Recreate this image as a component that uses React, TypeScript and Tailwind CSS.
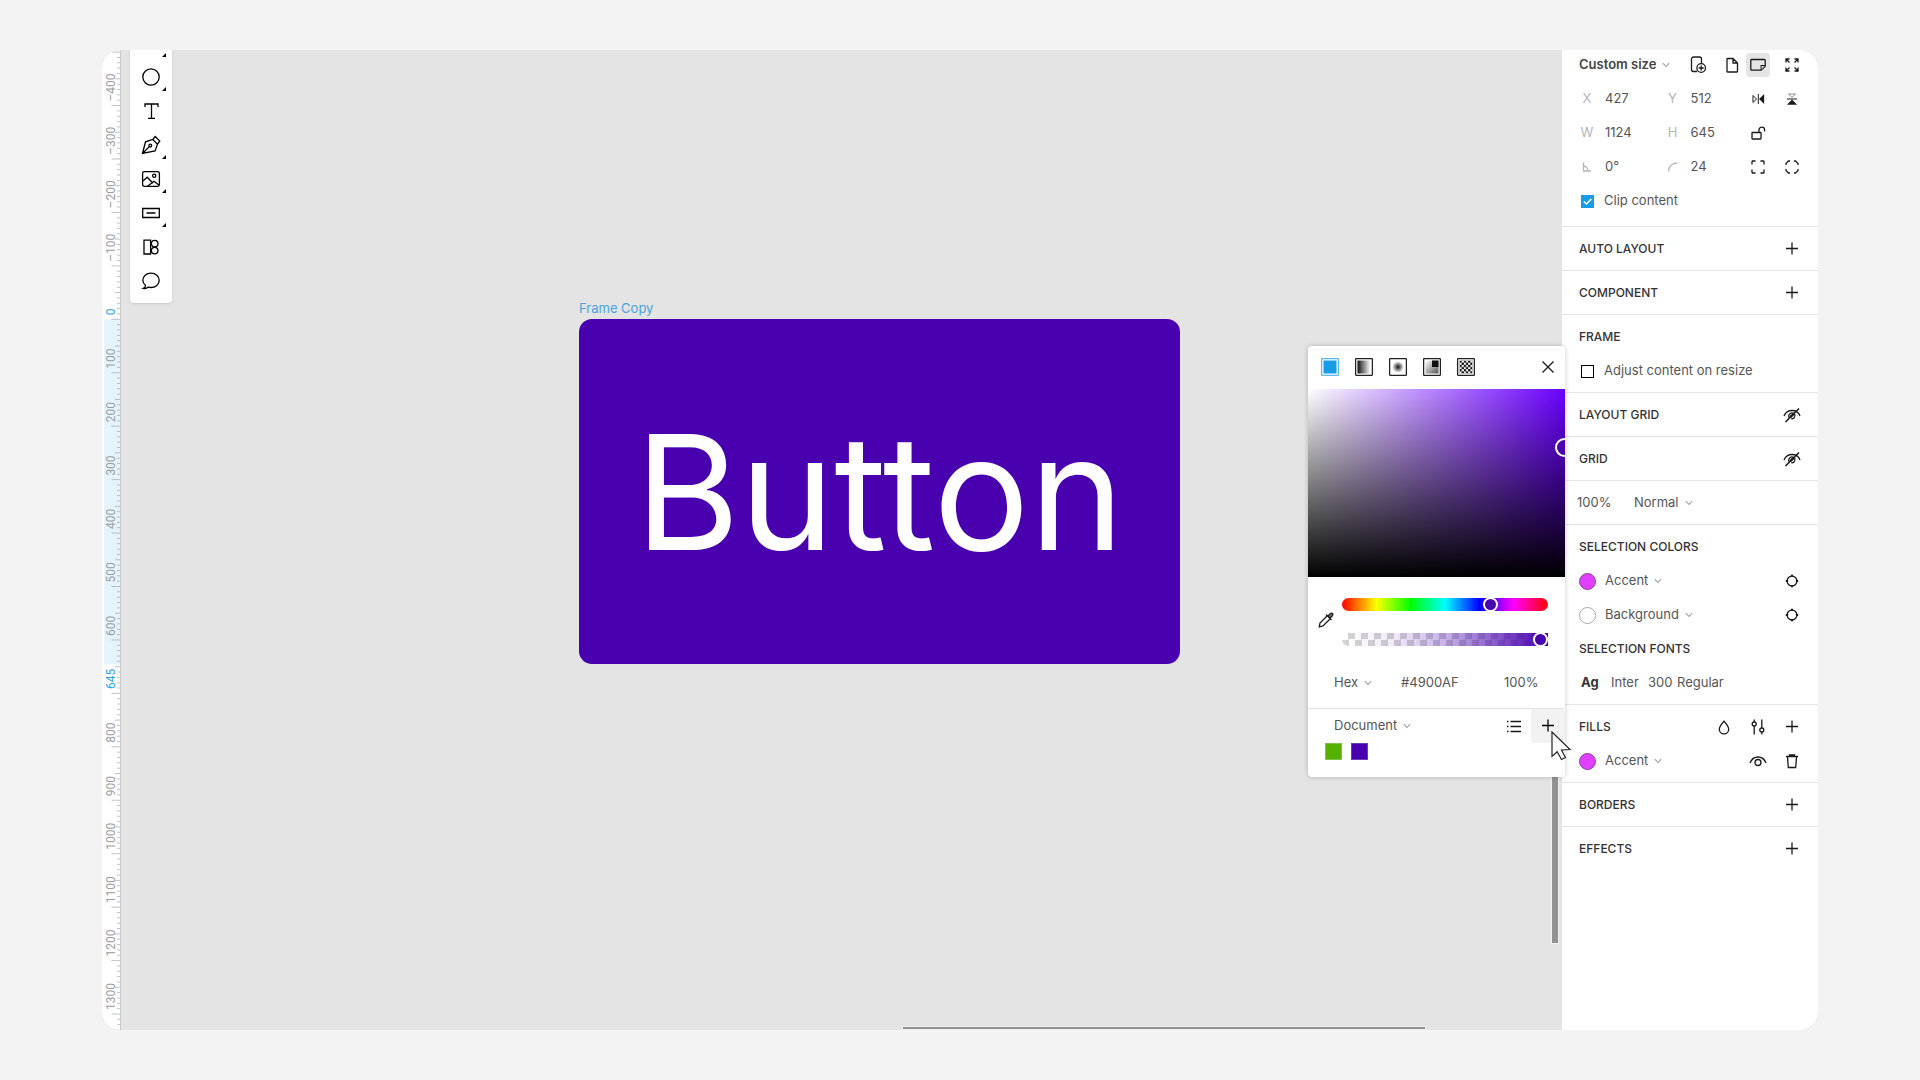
import { useId, type ReactNode } from "react";

type IconProps = { size?: number; children: ReactNode; className?: string };

function Icon({ size = 20, children, className = "" }: IconProps) {
  return (
    <svg
      width={size}
      height={size}
      viewBox={`0 0 ${size} ${size}`}
      fill="none"
      stroke="currentColor"
      strokeWidth="1.3"
      className={`shrink-0 ${className}`}
      aria-hidden="true"
    >
      {children}
    </svg>
  );
}

const Chevron = () => (
  <svg width="8" height="6" viewBox="0 0 8 6" fill="none" stroke="#a3a3a3" strokeWidth="1.1" className="pointer-events-none shrink-0" aria-hidden="true">
    <path d="M0.8 1.2 4 4.4 7.2 1.2" />
  </svg>
);

const PlusIcon = () => (
  <Icon>
    <path d="M10 3.500v12M4 9.500h12" />
  </Icon>
);

const HiddenIcon = () => (
  <Icon>
    <path d="M2 11C3.600 7.300 6.400 5.500 10 5.500s6.600 1.800 8 5.500" />
    <path d="M7.200 13a3.200 3.200 0 1 1 5.600-3.500c.8 2.600-1.300 4.500-3.500 4.200" />
    <path d="M3.500 17 17 3.500" strokeWidth="1.600" />
    <path d="M8.300 12.200l3.700-3.700" strokeWidth="2.400" />
  </Icon>
);

const TargetIcon = () => (
  <Icon>
    <circle cx="10" cy="10" r="4.900" />
    <path d="M10 3.800v2.300M10 13.900v2.300M3.800 10h2.300M13.900 10h2.300" strokeWidth="2.200" />
  </Icon>
);

/* Ruler */

const ZERO_Y = 269.3;
const SCALE = 0.5344;
const at = (v: number) => ZERO_Y + v * SCALE;

function Ruler() {
  const ticks = Array.from({ length: 186 }, (_, i) => -500 + i * 10);
  const labels = [-400, -300, -200, -100, 100, 200, 300, 400, 500, 600, 800, 900, 1000, 1100, 1200, 1300];
  return (
    <svg className="h-full w-[19px] shrink-0 bg-white" fontFamily="Roboto, sans-serif" fontSize="12" aria-label="Vertical ruler">
      <rect x="2" y={at(0)} width="16" height={645 * SCALE} fill="#e5f4fc" />
      {ticks.map((v) => {
        const x = v % 100 === 0 ? 9.500 : v % 50 === 0 ? 13 : 15;
        return <path key={v} d={`M${x} ${at(v)}H18`} stroke="#7d8a90" strokeOpacity="0.5" />;
      })}
      <path d="M18.500 0V2000" stroke="#c9c9c9" />
      {labels.map((v) => (
        <text key={v} transform={`translate(13 ${at(v) - 4}) rotate(-90)`} fill="#9a9ea1">
          {v < 0 ? `–${-v}` : v}
        </text>
      ))}
      <text transform={`translate(13 ${at(0) - 4}) rotate(-90)`} fill="#2aa3e8">0</text>
      <text transform={`translate(13 ${at(645) + 25}) rotate(-90)`} fill="#2aa3e8">645</text>
    </svg>
  );
}

/* Toolbar */

type Tool = { name: string; more?: boolean; icon: ReactNode };

const tools: Tool[] = [
  { name: "Ellipse", more: true, icon: <circle cx="10" cy="10" r="8.200" /> },
  { name: "Text", icon: <path d="M4 6V3h13v3M10.500 3v14.300M7 17.300h7" /> },
  {
    name: "Pen",
    more: true,
    icon: (
      <>
        <path d="M1.500 18.500 4.500 6.800 11.800 4.500l4.700 4.700-2.500 6.800zM11.800 4.500l2.400-3 4.600 4.500-2.300 3.200M1.500 18.500l6.800-6.900" />
        <circle cx="9.300" cy="10.600" r="1.400" />
      </>
    ),
  },
  {
    name: "Image",
    more: true,
    icon: (
      <>
        <rect x="1.600" y="2.600" width="16.800" height="14.800" rx="1.800" />
        <circle cx="13.200" cy="6.800" r="1.600" />
        <path d="M2 12l4.200-3.800 5.800 6M6.500 17.200l6.500-5 5.200 4" />
      </>
    ),
  },
  { name: "Input", more: true, icon: <path d="M1.700 5.500h16.600v9H1.700zM5.500 10h9" /> },
  {
    name: "Component",
    icon: (
      <>
        <path d="M3 3.200h6.600v13.800H3z" />
        <circle cx="13.700" cy="6.600" r="3.300" />
        <circle cx="13.700" cy="13.600" r="3.300" />
      </>
    ),
  },
  {
    name: "Comment",
    icon: <path d="M4.500 14.300C2.700 12.900 1.800 11.300 1.800 9.300c0-4 3.600-7.200 8.200-7.200s8.200 3.200 8.200 7.200-3.600 7.200-8.200 7.200c-1 0-1.900-.1-2.700-.4-1.400 1.300-3.200 1.700-5 1.300 1.500-.6 2.300-1.700 2.200-3.100z" />,
  },
];

const MoreMark = () => (
  <svg width="4" height="4" viewBox="0 0 4 4" className="absolute right-1.5 bottom-[3px]" aria-hidden="true">
    <path d="M4 0v4H0z" />
  </svg>
);

function Toolbar() {
  return (
    <div role="toolbar" aria-label="Tools" className="absolute top-0 left-[9px] w-[42px] rounded-b bg-white pb-[5px] shadow-sm">
      <div className="relative h-2.5">
        <MoreMark />
      </div>
      {tools.map((t) => (
        <button key={t.name} type="button" aria-label={t.name} className="relative flex h-[34px] w-full items-center justify-center">
          <Icon>{t.icon}</Icon>
          {t.more && <MoreMark />}
        </button>
      ))}
    </div>
  );
}

/* Shared controls */

function IconButton({ label, active, children }: { label: string; active?: boolean; children: ReactNode }) {
  return (
    <button type="button" aria-label={label} className="flex h-[34px] w-[34px] shrink-0 items-center justify-center text-[#1a1a1a]">
      <span className={active ? "flex size-6 items-center justify-center rounded-sm bg-[#e5e5e5]" : "flex size-6 items-center justify-center"}>
        {children}
      </span>
    </button>
  );
}

function Dropdown({ label, value, strong }: { label: string; value: string; strong?: boolean }) {
  return (
    <label className="flex items-center gap-1.5">
      <select
        aria-label={label}
        defaultValue={value}
        className={strong ? "field-sizing-content appearance-none font-semibold text-[#444]" : "field-sizing-content appearance-none"}
      >
        <option>{value}</option>
      </select>
      <Chevron />
    </label>
  );
}

function Field({ label, mark, value }: { label: string; mark: ReactNode; value: string }) {
  const id = useId();
  return (
    <>
      <label htmlFor={id} aria-label={label} className="flex justify-center text-[#b5b5b5]">
        {mark}
      </label>
      <input id={id} defaultValue={value} className="w-full min-w-0 pl-px" />
    </>
  );
}

const fieldRow = "grid h-[34px] grid-cols-[34px_1fr_34px_1fr_34px_34px] items-center";

function Section({ title, actions, children }: { title: string; actions?: ReactNode; children?: ReactNode }) {
  return (
    <section className="border-t border-[#e4e4e4] pt-[5px] pr-[9px] pb-1 pl-2">
      <div className="flex h-[34px] items-center">
        <Heading>{title}</Heading>
        {actions}
      </div>
      {children}
    </section>
  );
}

const Heading = ({ children }: { children: ReactNode }) => (
  <h2 className="flex-1 pl-[9px] text-xs font-medium text-[#333]">{children}</h2>
);

function ColorRow({ name, swatch, children }: { name: string; swatch: string; children: ReactNode }) {
  return (
    <div className="flex h-[34px] items-center">
      <span className="flex w-[34px] justify-center">
        <span className={`size-[17px] rounded-full border ${swatch}`} />
      </span>
      <div className="flex-1 pl-px">
        <Dropdown label={`${name} color`} value={name} />
      </div>
      {children}
    </div>
  );
}

const AddButton = ({ label }: { label: string }) => (
  <IconButton label={label}>
    <PlusIcon />
  </IconButton>
);

/* Inspector */

function Inspector() {
  return (
    <aside className="relative z-10 w-64 shrink-0 bg-white text-[13px] text-[#555]">
      <div className="flex h-full flex-col">
        <div className="h-44 pr-[9px] pl-2">
          <div className="-mt-0.5 flex h-[34px] items-center">
            <div className="flex-1 pl-[9px]">
              <Dropdown label="Frame size" value="Custom size" strong />
            </div>
            <IconButton label="Add device">
              <Icon>
                <path d="M9 16.500H5.500a2 2 0 0 1-2-2V4a2 2 0 0 1 2-2h6a2 2 0 0 1 2 2v4" />
                <circle cx="13.200" cy="13" r="4.300" />
                <path d="M13.200 10.500v5M10.700 13h5" />
              </Icon>
            </IconButton>
            <div className="-mr-2 flex">
              <IconButton label="Portrait">
                <Icon>
                  <path d="M5.500 3.500H11l4.500 4.500v8.500a.5.5 0 0 1-.5.5H5.500a.5.5 0 0 1-.5-.5V4a.5.5 0 0 1 .5-.5zM11 3.500V8h4.500" />
                </Icon>
              </IconButton>
            </div>
            <IconButton label="Landscape" active>
              <Icon>
                <path d="M3.500 4.500h13a.7.700 0 0 1 .7.700v6l-4 4H3.500a.7.700 0 0 1-.7-.7V5.200a.7.700 0 0 1 .7-.7zM17.200 10.700h-4v4.300" />
                <path d="M13.500 11h3.300l-3.300 3.400z" fill="#bbb" stroke="none" />
              </Icon>
            </IconButton>
            <IconButton label="Resize to fit">
              <Icon>
                <path d="M4 7.500V4h3.500M4 4l3.500 3.500M12.500 4H16v3.500M16 4l-3.500 3.500M4 12.500V16h3.500M4 16l3.500-3.500M12.500 16H16v-3.500M16 16l-3.500-3.500" />
              </Icon>
            </IconButton>
          </div>
          <div className={fieldRow}>
            <Field label="X position" mark="X" value="427" />
            <Field label="Y position" mark="Y" value="512" />
            <IconButton label="Flip horizontal">
              <Icon>
                <path d="M5 6.500v7L8.500 10z" strokeWidth="1" />
                <path d="M15.500 6.500v7L12 10z" fill="currentColor" />
                <path d="M10.300 5v10" strokeWidth="1" />
              </Icon>
            </IconButton>
            <IconButton label="Flip vertical">
              <Icon>
                <path d="M6.500 5h7L10 8.500z" strokeWidth="1" stroke="#888" />
                <path d="M6.500 15h7L10 11.500z" fill="currentColor" />
                <path d="M5 10h10" strokeWidth="1" />
              </Icon>
            </IconButton>
          </div>
          <div className={fieldRow}>
            <Field label="Width" mark="W" value="1124" />
            <Field label="Height" mark="H" value="645" />
            <IconButton label="Lock proportions">
              <Icon>
                <rect x="4" y="9.500" width="9" height="6.500" rx="0.500" />
                <path d="M11 9.500V7a2.800 2.800 0 0 1 5.600 0v1.500" />
              </Icon>
            </IconButton>
          </div>
          <div className={fieldRow}>
            <Field
              label="Rotation"
              mark={
                <Icon size={14}>
                  <path d="M3.500 2.500v8.500H11M3.500 6a5 5 0 0 1 4.500 5" />
                </Icon>
              }
              value="0°"
            />
            <Field
              label="Corner radius"
              mark={
                <Icon size={14}>
                  <path d="M2.500 11.500c0-5 3-8.500 9-8.500" />
                </Icon>
              }
              value="24"
            />
            <IconButton label="Corners">
              <Icon>
                <path d="M4 7.500V4.500L4.500 4h3M12.500 4h3l.5.5v3M4 12.500v3l.5.5h3M12.500 16h3l.5-.5v-3" />
              </Icon>
            </IconButton>
            <IconButton label="Smooth corners">
              <Icon>
                <path d="M4 8V6.500L6.500 4H8M12 4h1.500L16 6.500V8M4 12v1.500L6.500 16H8M12 16h1.500l2.500-2.500V12" />
              </Icon>
            </IconButton>
          </div>
          <label className="flex h-[34px] items-center">
            <span className="flex w-[34px] justify-center">
              <input type="checkbox" defaultChecked className="size-[13px] appearance-none bg-[#189ce8]" />
              <svg width="13" height="13" viewBox="0 0 13 13" fill="none" stroke="white" strokeWidth="1.600" className="pointer-events-none -ml-[13px]" aria-hidden="true">
                <path d="M2.800 6.500 5.500 9l4.800-5" />
              </svg>
            </span>
            Clip content
          </label>
        </div>

        <Section title="AUTO LAYOUT" actions={<AddButton label="Add auto layout" />} />
        <Section title="COMPONENT" actions={<AddButton label="Add component" />} />
        <Section title="FRAME">
          <label className="flex h-[34px] items-center">
            <span className="flex w-[34px] justify-center">
              <input type="checkbox" className="size-[13px] appearance-none border border-black" />
            </span>
            Adjust content on resize
          </label>
        </Section>
        <Section title="LAYOUT GRID" actions={<IconButton label="Show layout grid"><HiddenIcon /></IconButton>} />
        <Section title="GRID" actions={<IconButton label="Show grid"><HiddenIcon /></IconButton>} />

        <section className="flex h-11 items-center border-t border-[#e4e4e4] pl-[15px]">
          <input aria-label="Opacity" defaultValue="100%" className="w-[57px]" />
          <Dropdown label="Blend mode" value="Normal" />
        </section>

        <Section title="SELECTION COLORS">
          <ColorRow name="Accent" swatch="border-[#8f3f9c] bg-[#e040fb]">
            <IconButton label="Select Accent layers"><TargetIcon /></IconButton>
          </ColorRow>
          <ColorRow name="Background" swatch="border-[#a8a8a8] bg-white">
            <IconButton label="Select Background layers"><TargetIcon /></IconButton>
          </ColorRow>
          <div className="flex h-[34px] items-center">
            <Heading>SELECTION FONTS</Heading>
          </div>
          <div className="flex h-[34px] items-center pl-[11px]">
            <span className="w-[30px] font-bold text-[#333]">Ag</span>
            <span className="w-[37px]">Inter</span>
            <span className="w-[29px]">300</span>
            <span>Regular</span>
          </div>
        </Section>

        <Section
          title="FILLS"
          actions={
            <>
              <IconButton label="Color styles">
                <Icon>
                  <path d="M10 4.200c2.800 3 4.700 5.600 4.700 8a4.700 4.700 0 0 1-9.400 0c0-2.400 1.900-5 4.700-8z" />
                </Icon>
              </IconButton>
              <IconButton label="Adjust fills">
                <Icon>
                  <circle cx="6.200" cy="7" r="2" />
                  <circle cx="13.800" cy="13" r="2" />
                  <path d="M6.200 2.500V5M6.200 9v8.500M13.800 2.500V11M13.800 15v2.500" />
                </Icon>
              </IconButton>
              <AddButton label="Add fill" />
            </>
          }
        >
          <ColorRow name="Accent" swatch="border-[#8f3f9c] bg-[#e040fb]">
            <IconButton label="Toggle fill">
              <Icon>
                <path d="M2 12c1.600-4 4.400-6 8-6s6.400 2 8 6" />
                <circle cx="10" cy="11.500" r="3" />
              </Icon>
            </IconButton>
            <IconButton label="Delete fill">
              <Icon>
                <path d="M4 5.500h12M7.500 5.500V4h5v1.500M5.500 5.700l.8 10.800h7.400l.8-10.800" />
              </Icon>
            </IconButton>
          </ColorRow>
        </Section>
        <Section title="BORDERS" actions={<AddButton label="Add border" />} />
        <Section title="EFFECTS" actions={<AddButton label="Add effect" />} />
      </div>
      <ColorPicker />
    </aside>
  );
}

/* Color picker */

function FillType({ kind }: { kind: "solid" | "linear" | "radial" | "angular" | "pattern" }) {
  const id = useId();
  return (
    <Icon size={18} className={kind === "solid" ? "text-[#5ab8ee]" : "text-[#222]"}>
      <defs>
        {kind === "linear" && (
          <linearGradient id={id}>
            <stop offset="0" stopColor="#111" />
            <stop offset="1" stopColor="#fff" />
          </linearGradient>
        )}
        {kind === "radial" && (
          <radialGradient id={id}>
            <stop offset="0" stopColor="#111" />
            <stop offset="0.900" stopColor="#fff" />
          </radialGradient>
        )}
        {kind === "angular" && (
          <linearGradient id={id} x1="0" y1="0" x2="1" y2="1">
            <stop offset="0" stopColor="#fff" />
            <stop offset="1" stopColor="#555" />
          </linearGradient>
        )}
        {kind === "pattern" && (
          <pattern id={id} width="4.340" height="4.340" patternUnits="userSpaceOnUse" x="2.500" y="2.500">
            <path d="M0 0h2.170v2.170H0zM2.170 2.170h2.170v2.170H2.170z" fill="#000" stroke="none" />
          </pattern>
        )}
      </defs>
      <rect x="0.600" y="0.600" width="16.800" height="16.800" rx="0.800" />
      <rect x="2.500" y="2.500" width="13" height="13" fill={kind === "solid" ? "#189ce8" : `url(#${id})`} stroke="none" />
      {kind === "angular" && <path d="M9 2.500h6.500V9H9z" fill="#111" stroke="none" />}
    </Icon>
  );
}

const thumb =
  "[&::-webkit-slider-thumb]:size-[15px] [&::-webkit-slider-thumb]:appearance-none [&::-webkit-slider-thumb]:rounded-full [&::-webkit-slider-thumb]:border-2 [&::-webkit-slider-thumb]:border-white [&::-webkit-slider-thumb]:bg-[#4900af]";

function ColorPicker() {
  return (
    <div
      role="dialog"
      aria-label="Fill color"
      className="absolute top-[296px] right-[253px] w-[257px] rounded-[4px] bg-white shadow-[0_0_5px_rgba(0,0,0,0.22)]"
    >
      <div className="flex h-[43px] items-center pb-px pl-[5px]">
        <IconButton label="Solid"><FillType kind="solid" /></IconButton>
        <IconButton label="Linear gradient"><FillType kind="linear" /></IconButton>
        <IconButton label="Radial gradient"><FillType kind="radial" /></IconButton>
        <IconButton label="Angular gradient"><FillType kind="angular" /></IconButton>
        <IconButton label="Pattern"><FillType kind="pattern" /></IconButton>
        <div className="ml-auto">
          <IconButton label="Close">
            <Icon>
              <path d="M4.500 4.500l11 11M15.500 4.500l-11 11" />
            </Icon>
          </IconButton>
        </div>
      </div>
      <div className="relative h-[188px] overflow-hidden bg-[linear-gradient(to_top,#000,transparent),linear-gradient(to_right,#fff,#6a00ff)]">
        <span className="absolute top-[49px] -right-[9px] size-[19px] rounded-full border-2 border-white" />
      </div>
      <div className="flex items-center gap-2 pt-[21px] pr-[17px] pl-2.5">
        <button type="button" aria-label="Pick color" className="mb-1 text-[#1a1a1a]">
          <Icon size={16}>
            <path d="M9 4l-7 7-.8 3.800L5 14l7-7" />
            <path d="M9.300 3.700l3 3M8 2.500l5.500 5.500M10 4l2.300-2.300c1.800-1.300 3.300.3 2 2L12 6z" fill="#777" />
          </Icon>
        </button>
        <div className="flex flex-1 flex-col gap-[22px]">
          <input
            type="range"
            aria-label="Hue"
            min={0}
            max={360}
            defaultValue={265}
            className={`block h-[13px] w-full appearance-none rounded-full bg-[linear-gradient(to_right,#f00,#ff0,#0f0,#0ff,#00f,#f0f,#f00)] ${thumb}`}
          />
          <input
            type="range"
            aria-label="Alpha"
            min={0}
            max={100}
            defaultValue={100}
            className={`block h-[13px] w-full appearance-none rounded-l-full bg-[linear-gradient(to_right,#4900af00,#4900af14_25%,#4900af4d_50%,#4900afa6_75%,#4900af),repeating-conic-gradient(#d4d4d4_0_25%,#fff_0_50%)] bg-[length:100%_100%,13px_13px] ${thumb}`}
          />
        </div>
      </div>
      <div className="mt-5 flex h-[34px] items-center pl-[26px]">
        <div className="w-[67px]">
          <Dropdown label="Color format" value="Hex" />
        </div>
        <input aria-label="Hex value" defaultValue="#4900AF" className="w-[103px]" />
        <input aria-label="Alpha value" defaultValue="100%" className="w-9" />
      </div>
      <div className="mt-2 border-t border-[#e4e4e4] pb-[17px]">
        <div className="flex h-[34px] items-center pl-[26px]">
          <div className="flex-1">
            <Dropdown label="Color library" value="Document" />
          </div>
          <IconButton label="List view">
            <Icon>
              <path d="M3 5.500h1.500M3 10.500h1.500M3 15.500h1.500M6.500 5.500H17M6.500 10.500H17M6.500 15.500H17" />
            </Icon>
          </IconButton>
          <button type="button" aria-label="Add color" className="flex size-[34px] items-center justify-center rounded-[3px] bg-[#f2f2f2] text-black">
            <PlusIcon />
          </button>
        </div>
        <div className="flex gap-[9px] pl-[17px]">
          <button type="button" aria-label="Green" className="size-[17px] border border-[#7fc34a] bg-[#55b000]" />
          <button type="button" aria-label="Purple" className="size-[17px] border border-[#6a40b8] bg-[#4900af]" />
        </div>
      </div>
      <svg width="21" height="30" viewBox="0 0 21 30" className="pointer-events-none absolute top-[385px] left-[243px]" aria-hidden="true">
        <path d="M1 1v24.500l5.200-4.700 4.300 7.700 4-2-4-7.500 8.500-.5z" fill="white" stroke="#222" strokeWidth="1.200" />
      </svg>
    </div>
  );
}

/* Canvas */

function Canvas() {
  return (
    <main className="relative min-w-0 flex-1 overflow-hidden bg-[#e4e4e4]">
      <Toolbar />
      <div className="absolute top-[248px] left-[458px]">
        <div className="h-[21px] text-[13px] leading-[20px] text-[#4aa3df]">Frame Copy</div>
        <div className="flex h-[345px] w-[601px] items-center justify-center rounded-[13px] bg-[#4900af] text-[160px] leading-none text-white [font-variation-settings:'opsz'_14]">
          Button
        </div>
      </div>
      <div className="absolute top-[600px] right-[3px] h-[294px] w-2 border border-[#f0f0f0] bg-[#929292]" />
      <div className="absolute right-[136px] bottom-0 h-1 w-[524px] border border-[#f0f0f0] bg-[#929292]" />
    </main>
  );
}

export default function App() {
  return (
    <div className="flex h-screen bg-[#f3f3f3] px-[102px] py-[50px] font-['Inter',sans-serif] text-black">
      <div className="flex flex-1 overflow-hidden rounded-[20px]">
        <Ruler />
        <Canvas />
        <Inspector />
      </div>
    </div>
  );
}
